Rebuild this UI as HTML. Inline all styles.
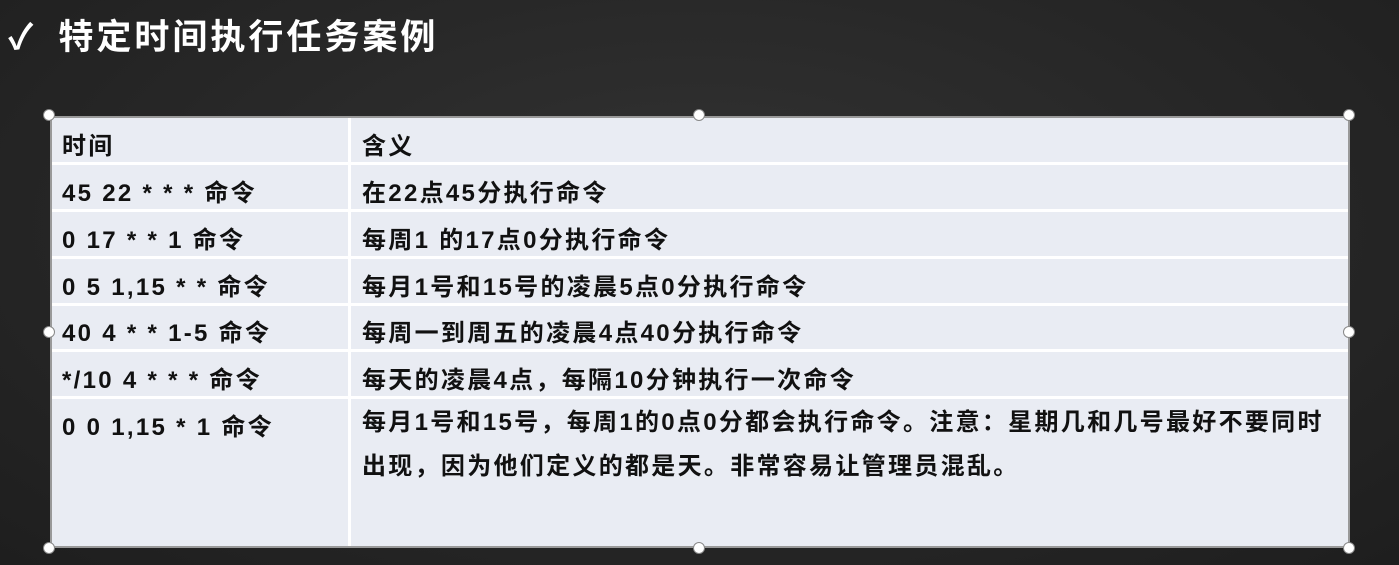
<!DOCTYPE html>
<html><head><meta charset="utf-8"><style>
body{margin:0;width:1399px;height:565px;background:#262626;overflow:hidden;position:relative;font-family:"Liberation Sans","Noto Sans CJK SC",sans-serif;}
.bg{position:absolute;inset:0;background:radial-gradient(ellipse at 50% 40%,#333 0%,#262626 60%,#1e1e1e 100%);}
.title{position:absolute;left:8px;top:12px;color:#fff;font-size:35px;font-weight:bold;line-height:52px;letter-spacing:3px;}
.title span{margin-left:22px}
.tbl{position:absolute;left:50px;top:116px;width:1300px;height:432px;background:#e9ecf3;border:2px solid #999;box-sizing:border-box;}
.r{position:absolute;left:0;width:100%;border-bottom:3px solid #fff;box-sizing:border-box;}
.c{position:absolute;font-size:24px;font-weight:bold;color:#111;letter-spacing:2.3px;white-space:nowrap}
.vl{position:absolute;left:296px;top:0;bottom:0;width:3px;background:#fff}
.h{position:absolute;width:12px;height:12px;border-radius:50%;background:#fff;border:1px solid #888;box-sizing:border-box}
</style></head><body><div class="bg"></div>
<div class="title">✓<span>特定时间执行任务案例</span></div>
<div class="tbl">
<div class="vl"></div>
<div class="r" style="top:0;height:47px"></div>
<div class="r" style="top:47px;height:47px"></div>
<div class="r" style="top:94px;height:47px"></div>
<div class="r" style="top:141px;height:47px"></div>
<div class="r" style="top:188px;height:46px"></div>
<div class="r" style="top:234px;height:47px"></div>
<div class="c" style="left:10px;top:8px">时间</div><div class="c" style="left:310px;top:8px">含义</div>
<div class="c" style="left:10px;top:55px">45 22 * * * 命令</div><div class="c" style="left:310px;top:55px">在22点45分执行命令</div>
<div class="c" style="left:10px;top:102px">0 17 * * 1 命令</div><div class="c" style="left:310px;top:102px">每周1 的17点0分执行命令</div>
<div class="c" style="left:10px;top:149px">0 5 1,15 * * 命令</div><div class="c" style="left:310px;top:149px">每月1号和15号的凌晨5点0分执行命令</div>
<div class="c" style="left:10px;top:195px">40 4 * * 1-5 命令</div><div class="c" style="left:310px;top:195px">每周一到周五的凌晨4点40分执行命令</div>
<div class="c" style="left:10px;top:242px">*/10 4 * * * 命令</div><div class="c" style="left:310px;top:242px">每天的凌晨4点，每隔10分钟执行一次命令</div>
<div class="c" style="left:10px;top:289px">0 0 1,15 * 1 命令</div><div class="c" style="left:310px;top:283px;line-height:44px">每月1号和15号，每周1的0点0分都会执行命令。注意：星期几和几号最好不要同时<br>出现，因为他们定义的都是天。非常容易让管理员混乱。</div>
</div>
<div class="h" style="left:43px;top:109px"></div><div class="h" style="left:693px;top:109px"></div><div class="h" style="left:1343px;top:109px"></div>
<div class="h" style="left:43px;top:326px"></div><div class="h" style="left:1343px;top:326px"></div>
<div class="h" style="left:43px;top:542px"></div><div class="h" style="left:693px;top:542px"></div><div class="h" style="left:1343px;top:542px"></div>
</body></html>
